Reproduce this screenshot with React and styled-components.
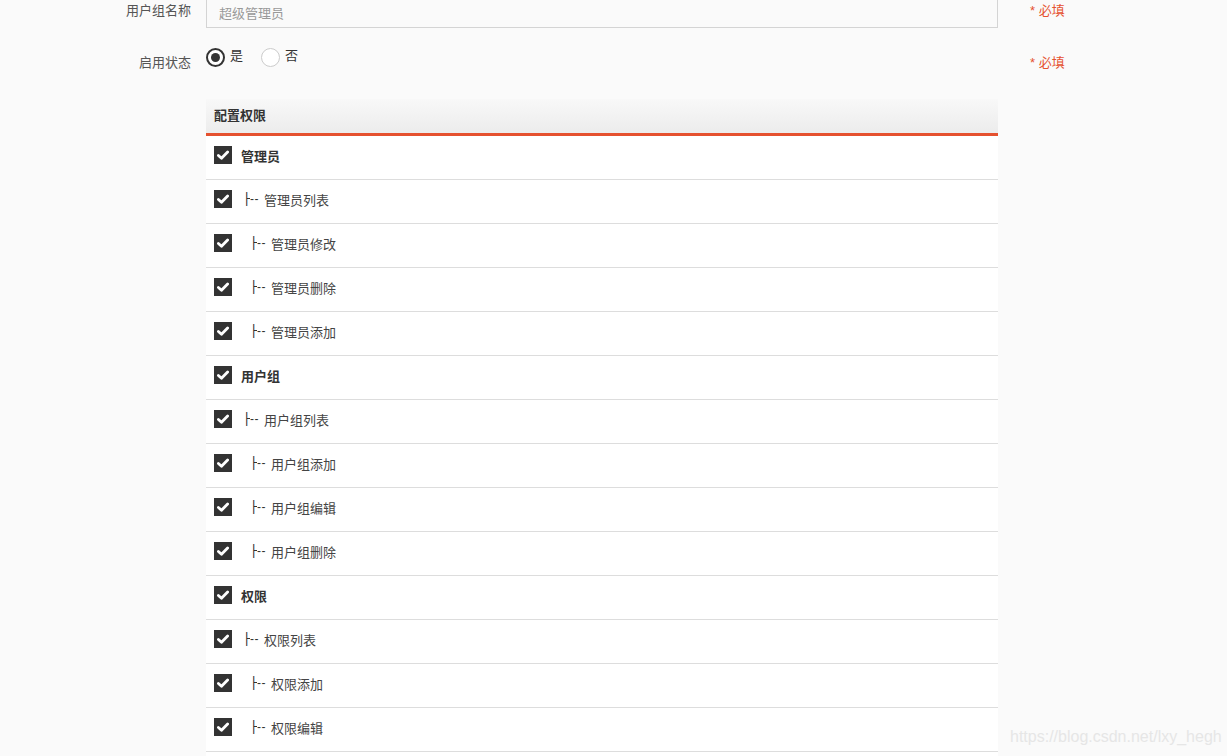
import React from 'react';
import styled, { createGlobalStyle } from 'styled-components';

const GlobalStyle = createGlobalStyle`
  html, body {
    margin: 0;
    padding: 0;
    background: #fafafa;
    overflow: hidden;
  }
  body {
    font-family: "Liberation Sans", "Noto Sans CJK SC", sans-serif;
    font-size: 13px;
    color: #333;
  }
`;

const groups = [
  {
    name: '管理员',
    items: [
      { label: '管理员列表', level: 1 },
      { label: '管理员修改', level: 2 },
      { label: '管理员删除', level: 2 },
      { label: '管理员添加', level: 2 },
    ],
  },
  {
    name: '用户组',
    items: [
      { label: '用户组列表', level: 1 },
      { label: '用户组添加', level: 2 },
      { label: '用户组编辑', level: 2 },
      { label: '用户组删除', level: 2 },
    ],
  },
  {
    name: '权限',
    items: [
      { label: '权限列表', level: 1 },
      { label: '权限添加', level: 2 },
      { label: '权限编辑', level: 2 },
      { label: '权限删除', level: 2 },
    ],
  },
];

function CheckBox() {
  return (
    <Box>
      <svg width="12" height="10" viewBox="0 0 12 10">
        <path
          d="M1.4 5.4 L4.5 8.3 L10.6 2"
          fill="none"
          stroke="#fff"
          strokeWidth="2.8"
          strokeLinecap="round"
          strokeLinejoin="round"
        />
      </svg>
    </Box>
  );
}

export default function App() {
  return (
    <Page>
      <GlobalStyle />
      <Form>
        <FieldRow>
          <Label top={8}>用户组名称</Label>
          <Input defaultValue="" placeholder="超级管理员" />
          <Required top={8}>* 必填</Required>
        </FieldRow>

        <FieldRow gap={14}>
          <Label top={12}>启用状态</Label>
          <RadioGroup>
            <RadioOption>
              <Radio checked />
              <span>是</span>
            </RadioOption>
            <RadioOption>
              <Radio />
              <span>否</span>
            </RadioOption>
          </RadioGroup>
          <Required top={12}>* 必填</Required>
        </FieldRow>

        <FieldRow gap={27}>
          <span />
          <Panel>
            <PanelHeader>配置权限</PanelHeader>
            {groups.map(group => (
              <React.Fragment key={group.name}>
                <TreeRow>
                  <CheckBox />
                  <GroupName>{group.name}</GroupName>
                </TreeRow>
                {group.items.map(item => (
                  <TreeRow key={item.label}>
                    <CheckBox />
                    <ItemName level={item.level}>
                      <Branch>
                        <Bar>├</Bar>--
                      </Branch>
                      {item.label}
                    </ItemName>
                  </TreeRow>
                ))}
              </React.Fragment>
            ))}
          </Panel>
          <span />
        </FieldRow>
      </Form>
      <Watermark>https://blog.csdn.net/lxy_hegh</Watermark>
    </Page>
  );
}

const Page = styled.div`
  position: relative;
  width: 1227px;
  height: 756px;
  overflow: hidden;
`;

const Form = styled.div`
  display: flex;
  flex-direction: column;
  margin-top: -6px;
`;

const FieldRow = styled.div`
  display: grid;
  grid-template-columns: 191px 792px auto;
  column-gap: 15px;
  align-items: start;
  margin-top: ${p => p.gap || 0}px;
`;

const Label = styled.div`
  text-align: right;
  color: #555;
  font-size: 13px;
  line-height: 18px;
  padding-top: ${p => p.top}px;
`;

const Input = styled.input`
  box-sizing: border-box;
  height: 34px;
  width: 100%;
  border: 1px solid #d4d4d4;
  background: #fafafa;
  padding: 4px 12px 0;
  font-family: inherit;
  font-size: 13px;
  outline: none;
  &::placeholder {
    color: #999;
  }
`;

const Required = styled.div`
  color: #e5512f;
  font-size: 13px;
  line-height: 18px;
  margin-left: 17px;
  padding-top: ${p => p.top}px;
`;

const RadioGroup = styled.div`
  display: flex;
  align-items: center;
  gap: 18px;
  height: 30px;
`;

const RadioOption = styled.label`
  display: flex;
  align-items: center;
  gap: 5px;
  color: #333;
  font-size: 13px;
  line-height: 18px;
  & > span:last-child {
    margin-top: -2px;
  }
`;

const Radio = styled.span`
  box-sizing: border-box;
  width: 19px;
  height: 19px;
  border-radius: 50%;
  background: #fff;
  border: ${p => (p.checked ? '2px solid #333' : '1px solid #ccc')};
  display: flex;
  align-items: center;
  justify-content: center;
  &::after {
    content: '';
    display: ${p => (p.checked ? 'block' : 'none')};
    width: 9px;
    height: 9px;
    border-radius: 50%;
    background: #333;
  }
`;

const Panel = styled.div`
  display: flex;
  flex-direction: column;
  background: #fff;
`;

const PanelHeader = styled.div`
  height: 34px;
  line-height: 34px;
  padding-left: 8px;
  font-weight: bold;
  font-size: 13px;
  color: #333;
  background: linear-gradient(#f8f8f8, #ececec);
  border-bottom: 3px solid #e5512f;
`;

const TreeRow = styled.div`
  box-sizing: border-box;
  display: flex;
  align-items: center;
  height: 44px;
  padding: 0 0 5px 8px;
  border-bottom: 1px solid #dddddd;
`;

const Box = styled.span`
  width: 18px;
  height: 18px;
  background: #333;
  display: flex;
  align-items: center;
  justify-content: center;
  margin-right: 9px;
`;

const GroupName = styled.span`
  font-weight: bold;
  font-size: 13px;
  color: #333;
`;

const ItemName = styled.span`
  display: flex;
  align-items: center;
  font-size: 13px;
  color: #444;
  padding-left: ${p => (p.level === 2 ? 9 : 2)}px;
`;

const Branch = styled.span`
  display: inline-flex;
  align-items: center;
  width: 21px;
  white-space: nowrap;
  font-size: 12px;
  letter-spacing: 0.5px;
  color: #333;
`;

const Bar = styled.span`
  font-family: "DejaVu Sans Mono", monospace;
  font-size: 13px;
  line-height: 14px;
  display: inline-block;
  width: 7px;
  overflow: hidden;
`;

const Watermark = styled.div`
  position: absolute;
  left: 1010px;
  top: 728px;
  font-family: "Liberation Sans", sans-serif;
  font-size: 16px;
  color: #e6e6e6;
`;
